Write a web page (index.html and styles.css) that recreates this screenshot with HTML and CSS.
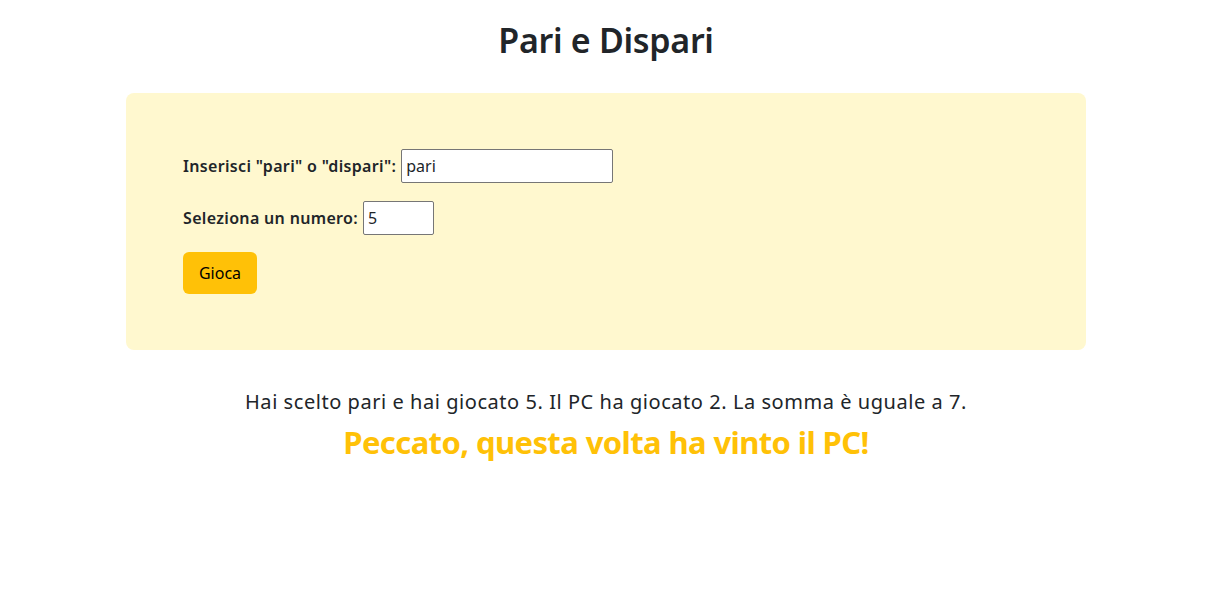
FILE: index.html
```html
<!DOCTYPE html>
<html lang="it">
<head>
<meta charset="utf-8">
<title>Pari e Dispari</title>
<link rel="stylesheet" href="styles.css">
</head>
<body>
<main class="page">
  <h1 class="title">Pari e Dispari</h1>
  <section class="card">
    <form class="game-form">
      <div class="row">
        <label class="label" for="scelta">Inserisci "pari" o "dispari":</label>
        <input class="input input-text" id="scelta" type="text" value="pari">
      </div>
      <div class="row">
        <label class="label" for="numero">Seleziona un numero:</label>
        <input class="input input-num" id="numero" type="text" value="5">
      </div>
      <button class="btn" type="button">Gioca</button>
    </form>
  </section>
  <p class="result">Hai scelto pari e hai giocato 5. Il PC ha giocato 2. La somma è uguale a 7.</p>
  <h2 class="outcome">Peccato, questa volta ha vinto il PC!</h2>
</main>
</body>
</html>
```

FILE: styles.css
```css
* { box-sizing: border-box; }
html, body { margin: 0; padding: 0; background: #fff; }
body {
  font-family: "Noto Sans", "Open Sans", sans-serif;
  color: #212529;
  font-size: 16px;
}
.page {
  padding-left: 5px;
  display: flex;
  flex-direction: column;
  align-items: center;
}
.title {
  margin: 16px 0 0;
  font-size: 34px;
  font-weight: 600;
  line-height: 48px;
  letter-spacing: -0.3px;
}
.card {
  margin-top: 29px;
  width: 960px;
  height: 257px;
  background: #fff8cf;
  border-radius: 8px;
  padding: 56px 57px 55px;
}
.game-form {
  display: flex;
  flex-direction: column;
  align-items: flex-start;
}
.row {
  display: flex;
  align-items: center;
  gap: 5px;
  margin-bottom: 18px;
}
.label {
  font-size: 16px;
  font-weight: 600;
  letter-spacing: 0.33px;
}
.input {
  height: 34px;
  border: 1px solid #767676;
  border-radius: 2px;
  background: #fff;
  font-family: "Noto Sans", sans-serif;
  font-size: 16px;
  color: #212529;
  padding: 0 4px;
}
.input-text { width: 212px; }
.input-num { width: 71px; }
.btn {
  width: 74px;
  height: 42px;
  margin-top: -1px;
  background: #ffc107;
  border: none;
  border-radius: 6px;
  font-family: "Noto Sans", sans-serif;
  font-size: 16px;
  color: #000;
  padding: 0;
}
.result {
  margin: 37px 0 0;
  font-size: 20px;
  line-height: 30px;
  letter-spacing: 0.55px;
}
.outcome {
  margin: 6px 0 0;
  font-size: 31px;
  font-weight: 700;
  color: #ffc107;
  line-height: 38px;
  letter-spacing: -0.6px;
}
```
